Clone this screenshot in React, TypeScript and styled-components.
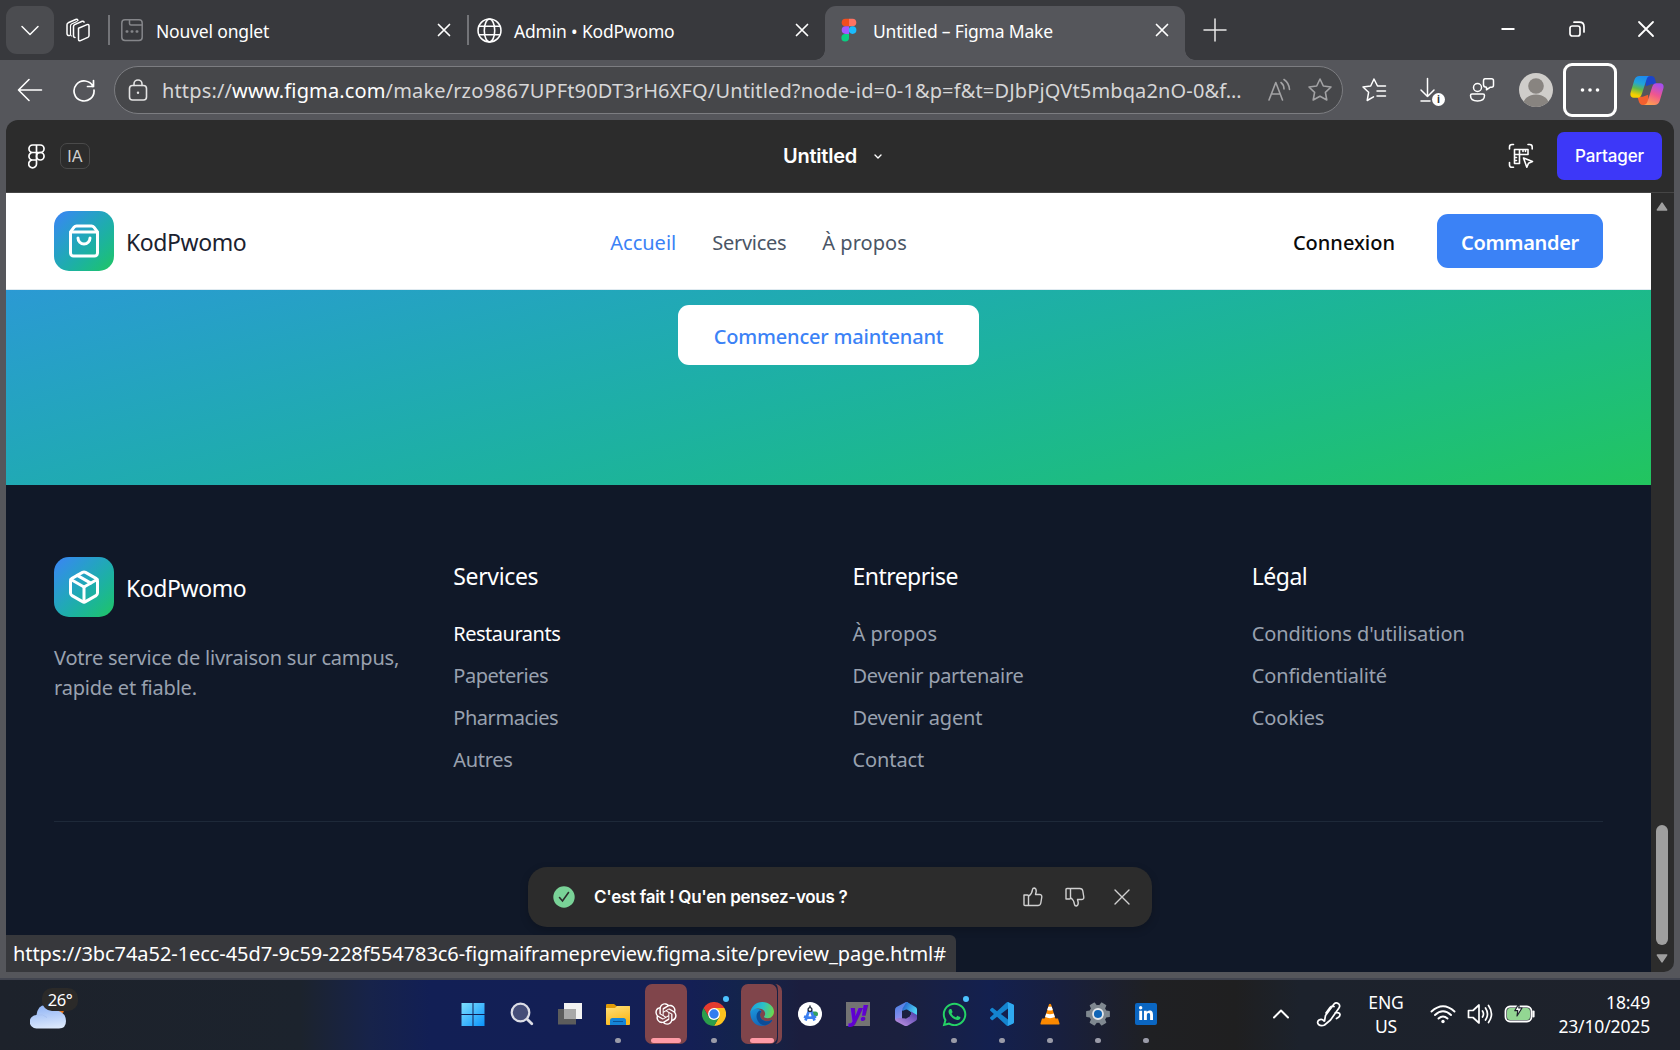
import React from 'react';
import styled, { createGlobalStyle, css } from 'styled-components';
import { ShoppingBag, Package } from 'lucide-react';
import { RiOpenaiFill } from 'react-icons/ri';
import { FaWhatsapp, FaLinkedinIn } from 'react-icons/fa';

const GlobalStyle = createGlobalStyle`
  * { box-sizing: border-box; }
  body { margin: 0; background: #55565b; overflow: hidden; }
`;

const segoe = css`font-family: 'Noto Sans', 'Open Sans', sans-serif;`;
const inter = css`font-family: Inter, sans-serif;`;
const brandGradient = 'linear-gradient(to bottom right in oklab, #3b82f6, #22c55e)';

const Desktop = styled.div`
  width: 1680px;
  height: 1050px;
  display: flex;
  flex-direction: column;
  background: #55565b;
  ${segoe}
`;

/* ---------- shared ---------- */

const Text = styled.span<{ $ls?: number }>`
  white-space: nowrap;
  letter-spacing: ${(p) => p.$ls ?? 0}px;
`;

const Icon = styled.svg<{ $stroke?: string; $sw?: number }>`
  display: block;
  flex: none;
  fill: none;
  stroke: ${(p) => p.$stroke ?? '#fff'};
  stroke-width: ${(p) => p.$sw ?? 1.5};
  stroke-linecap: round;
  stroke-linejoin: round;
`;

const Glyph = styled.svg`
  display: block;
  flex: none;
`;

const Slot = styled.div<{ $w: number }>`
  flex: none;
  width: ${(p) => p.$w}px;
  height: 100%;
  display: flex;
  align-items: center;
  justify-content: center;
`;

/* ---------- tab strip ---------- */

const TabStrip = styled.div`
  flex: none;
  height: 60px;
  display: flex;
  background: #38393d;
`;

const TabMenu = styled.div`
  flex: none;
  width: 48px;
  height: 48px;
  margin: 6px 0 0 6px;
  border-radius: 11px;
  background: #4b4c50;
  display: flex;
  align-items: center;
  justify-content: center;
`;

const TabDivider = styled.div<{ $gap?: number }>`
  flex: none;
  width: 2px;
  height: 30px;
  margin: 15px 0 0 ${(p) => p.$gap ?? 0}px;
  background: #737478;
`;

const Tab = styled.div<{ $w: number; $active?: boolean; $left: number }>`
  position: relative;
  flex: none;
  width: ${(p) => p.$w}px;
  height: 54px;
  margin-top: 6px;
  padding: 0 11px 6px ${(p) => p.$left}px;
  display: flex;
  align-items: center;
  gap: 12px;
  border-radius: 11px 11px 0 0;
  background: ${(p) => (p.$active ? '#55565b' : 'transparent')};
  color: #fff;
  font-size: 17.5px;
  ${(p) =>
    p.$active &&
    css`
      &::before, &::after {
        content: '';
        position: absolute;
        bottom: 0;
        width: 10px;
        height: 10px;
      }
      &::before { left: -10px; background: radial-gradient(circle at 0 0, transparent 9.5px, #55565b 10px); }
      &::after { right: -10px; background: radial-gradient(circle at 100% 0, transparent 9.5px, #55565b 10px); }
    `}
`;

const TabTitle = styled(Text)`
  flex: 1;
  padding-top: 1px;
`;

const WindowControls = styled.div`
  margin-left: auto;
  display: flex;
  height: 58px;
`;

/* ---------- address bar ---------- */

const Toolbar = styled.div`
  flex: none;
  height: 60px;
  padding-left: 3px;
  display: flex;
  align-items: center;
`;

const AddressBar = styled.div`
  flex: none;
  width: 1229px;
  height: 48px;
  margin: 0 4px 0 3px;
  padding-left: 11px;
  display: flex;
  align-items: center;
  border: 1px solid #7c7d81;
  border-radius: 24px;
  background: #46474a;
`;

const Url = styled(Text)`
  width: 1108px;
  padding: 1px 0 0 12px;
  font-size: 20px;
  color: #d6d6d7;
  b { font-weight: 400; color: #fff; }
`;

const DownloadSlot = styled(Slot)`
  position: relative;
`;

const DownloadBadge = styled.span`
  position: absolute;
  left: 31px;
  top: 33px;
  width: 13px;
  height: 13px;
  border-radius: 50%;
  background: #fff;
  color: #333;
  font-weight: 700;
  font-size: 10px;
  line-height: 13px;
  text-align: center;
`;

const MoreButton = styled.div`
  flex: none;
  width: 54px;
  height: 54px;
  border: 3px solid #fff;
  border-radius: 9px;
  display: flex;
  align-items: center;
  justify-content: center;
`;

/* ---------- page ---------- */

const PageFrame = styled.div`
  position: relative;
  flex: none;
  height: 852px;
  margin: 0 6px;
  display: flex;
  flex-direction: column;
  border-radius: 12px 12px 10px 0;
  overflow: hidden;
  background: #2c2c2c;
`;

const FigmaBar = styled.header`
  flex: none;
  height: 73px;
  border-bottom: 1px solid #454545;
  padding: 0 12px 0 22px;
  display: flex;
  align-items: center;
  color: #fff;
  ${inter}
`;

const FileGroup = styled.div`
  width: 755px;
  display: flex;
  align-items: center;
  gap: 15px;
`;

const AiBadge = styled.div`
  width: 30px;
  height: 26px;
  border: 1px solid #4a4a4a;
  border-radius: 7px;
  display: flex;
  align-items: center;
  justify-content: center;
  font-size: 16.5px;
  color: #cfcfcf;
`;

const FileTitle = styled(Text)`
  margin-right: 14px;
  font-size: 20px;
  font-weight: 600;
`;

const BarActions = styled.div`
  margin-left: auto;
  display: flex;
  align-items: center;
  gap: 23px;
`;

const ShareButton = styled.button`
  width: 105px;
  height: 48px;
  padding: 0;
  border: 0;
  border-radius: 7px;
  background: #3d38f8;
  color: #fff;
  font-size: 17px;
  font-weight: 500;
  letter-spacing: -0.12px;
  ${inter}
`;

const Viewport = styled.div`
  flex: 1;
  min-height: 0;
  display: flex;
`;

const Site = styled.div`
  width: 1645px;
  display: flex;
  flex-direction: column;
`;

const SiteHeader = styled.header`
  flex: none;
  height: 97px;
  padding: 0 48px;
  display: flex;
  align-items: center;
  background: #fff;
  border-bottom: 1px solid #dfeaf0;
`;

const Brand = styled.div`
  display: flex;
  align-items: center;
  gap: 12px;
`;

const BrandMark = styled.div`
  flex: none;
  width: 60px;
  height: 60px;
  border-radius: 15px;
  display: flex;
  align-items: center;
  justify-content: center;
  background: ${brandGradient};
  color: #fff;
`;

const BrandName = styled(Text)<{ $dark?: boolean }>`
  padding-top: 1px;
  font-size: 23px;
  line-height: 36px;
  color: ${(p) => (p.$dark ? '#1b2230' : '#fff')};
`;

const Nav = styled.nav`
  margin-left: 364px;
  display: flex;
  gap: 36px;
  padding-top: 3px;
`;

const NavLink = styled(Text)<{ $active?: boolean }>`
  font-size: 20px;
  color: ${(p) => (p.$active ? '#3b82f6' : '#4a5565')};
`;

const Account = styled.div`
  margin-left: auto;
  display: flex;
  align-items: center;
  gap: 42px;
`;

const SignIn = styled(Text)`
  padding-top: 3px;
  font-size: 20px;
  font-weight: 500;
  color: #0a0a0a;
`;

const OrderButton = styled.button`
  width: 166px;
  height: 54px;
  padding: 2px 0 0;
  border: 0;
  border-radius: 11px;
  background: #3b82f6;
  color: #fff;
  font-size: 20px;
  font-weight: 600;
  letter-spacing: -0.32px;
  ${segoe}
`;

const CallToAction = styled.section`
  flex: none;
  height: 195px;
  padding-top: 15px;
  display: flex;
  justify-content: center;
  background: ${brandGradient} bottom / 100% 432px no-repeat;
`;

const StartButton = styled.button`
  width: 301px;
  height: 60px;
  padding: 2px 0 0;
  border: 0;
  border-radius: 11px;
  background: #fff;
  color: #3b82f6;
  font-size: 20px;
  font-weight: 500;
  letter-spacing: -0.2px;
  ${segoe}
`;

const Footer = styled.footer`
  flex: 1;
  padding: 72px 48px 0;
  background: #101828;
`;

const FooterGrid = styled.div`
  display: grid;
  grid-template-columns: repeat(4, 1fr);
  column-gap: 48px;
  padding-bottom: 48px;
  border-bottom: 1px solid #1e2939;
`;

const Tagline = styled.p`
  margin: 26px 0 0;
  font-size: 20px;
  line-height: 30px;
  letter-spacing: -0.21px;
  white-space: nowrap;
  color: #99a1af;
`;

const ColumnTitle = styled.h3`
  margin: 1px 0 23px;
  font-size: 23px;
  font-weight: 400;
  line-height: 36px;
  color: #fff;
`;

const LinkList = styled.ul`
  margin: 0;
  padding: 2px 0 0;
  height: 156px;
  list-style: none;
  display: flex;
  flex-direction: column;
  gap: 12px;
`;

const FooterLink = styled.li<{ $hover?: boolean }>`
  flex: none;
  height: 30px;
  font-size: 20px;
  line-height: 30px;
  color: ${(p) => (p.$hover ? '#fff' : '#99a1af')};
`;

const Scrollbar = styled.div`
  width: 23px;
  display: flex;
  flex-direction: column;
  align-items: center;
  padding: 9px 1px 9px 0;
`;

const Thumb = styled.div`
  width: 12px;
  height: 120px;
  margin: auto 0 8px;
  border-radius: 6px;
  background: #9f9f9f;
`;

const Toast = styled.div`
  position: absolute;
  left: 522px;
  top: 747px;
  width: 624px;
  height: 60px;
  padding: 0 19px 0 25px;
  display: flex;
  align-items: center;
  border-radius: 19px;
  background: #2c2c2c;
  box-shadow: 0 3px 8px rgba(0, 0, 0, 0.2);
  color: #fff;
  ${inter}
`;

const ToastText = styled(Text)`
  flex: 1;
  margin-left: 19px;
  font-size: 17px;
  font-weight: 600;
`;

const ToastActions = styled.div`
  display: flex;
  align-items: center;
  gap: 20px;
`;

const DismissIcon = styled(Icon)`
  margin-left: 5px;
`;

const LinkStatus = styled.div`
  position: absolute;
  left: 0;
  bottom: 0;
  width: 950px;
  height: 37px;
  padding: 1px 0 0 7px;
  border-radius: 0 6px 0 0;
  background: #37383c;
  color: #fff;
  font-size: 20px;
  line-height: 36px;
`;

/* ---------- taskbar ---------- */

const Taskbar = styled.footer`
  flex: none;
  height: 72px;
  margin-top: 6px;
  padding-bottom: 2px;
  display: flex;
  align-items: center;
  border-top: 2px solid #41444f;
  color: #fff;
  font-size: 17.5px;
  background: linear-gradient(90deg, #1d222b 0, #1c232d 300px, #17234a 370px, #121f55 430px, #141f55 690px, #13244b 745px, #1b1e3e 800px,
    #1b203e 900px, #13204f 990px, #181f3e 1060px, #1f2023 1150px, #1f1f20 1235px, #1c222c 1300px, #1e222b 1680px);
`;

const Weather = styled.div`
  position: relative;
  flex: none;
  width: 450px;
  height: 70px;
  padding: 25px 0 0 30px;
`;

const Temperature = styled.span`
  position: absolute;
  left: 42px;
  top: 9px;
  width: 36px;
  height: 23px;
  border-radius: 10px;
  background: #2b2a29;
  font-size: 16.5px;
  line-height: 23px;
  text-align: center;
  letter-spacing: -0.4px;
`;

const AppSlot = styled.div`
  position: relative;
  flex: none;
  width: 48px;
  height: 60px;
  display: flex;
  align-items: center;
  justify-content: center;
  &:nth-of-type(2) { padding-right: 2px; }
`;

const ActiveTile = styled.div<{ $stacked?: boolean }>`
  width: ${(p) => (p.$stacked ? 36 : 42)}px;
  margin-right: ${(p) => (p.$stacked ? 6 : 0)}px;
  height: 60px;
  padding-left: ${(p) => (p.$stacked ? 6 : 0)}px;
  border-radius: 7px;
  background: #80454b;
  display: flex;
  align-items: center;
  justify-content: center;
`;

const StackEdge = styled.div`
  position: absolute;
  left: 34px;
  top: 0;
  width: 10px;
  height: 60px;
  border-right: 4px solid #80454b;
  border-radius: 0 7px 7px 0;
`;

const Running = styled.div<{ $w?: number }>`
  position: absolute;
  bottom: 1px;
  left: 50%;
  width: ${(p) => p.$w ?? 6}px;
  height: 5px;
  transform: translateX(-50%);
  border-radius: 3px;
  background: ${(p) => (p.$w ? '#ff9ba6' : '#9a9ba8')};
`;

const Unread = styled.div`
  position: absolute;
  left: 33px;
  top: 12px;
  width: 6px;
  height: 6px;
  border-radius: 50%;
  background: #4cc2ff;
`;

const YahooTile = styled.div`
  width: 24px;
  height: 24px;
  background: #737373;
  color: #5f01d1;
  font: italic 900 22px/20px 'Open Sans', sans-serif;
  letter-spacing: -1px;
  text-align: center;
`;

const LinkedInTile = styled.div`
  width: 22px;
  height: 22px;
  border-radius: 2px;
  background: #0a66c2;
  display: flex;
  align-items: center;
  justify-content: center;
`;

const Tray = styled.div`
  height: 68px;
  margin-left: auto;
  padding-right: 30px;
  display: flex;
  align-items: center;
`;

const Stacked = styled.div<{ $w: number; $align: 'center' | 'right' }>`
  width: ${(p) => p.$w}px;
  text-align: ${(p) => p.$align};
  line-height: 24px;
  letter-spacing: -0.15px;
`;

/* ---------- drawings ---------- */

const CloseIcon = () => (
  <Icon width={24} height={24} viewBox="0 0 24 24" $sw={1.7}>
    <path d="M6.500 6.500l11 11M17.500 6.500L6.500 17.500" />
  </Icon>
);

const FigmaColor = () => (
  <Glyph width={24} height={24} viewBox="0 0 24 24">
    <path d="M12 .7H8.500a3.800 3.800 0 0 0 0 7.600H12z" fill="#f24e1e" />
    <path d="M12 .7h3.500a3.800 3.800 0 0 1 0 7.600H12z" fill="#ff7262" />
    <path d="M12 8.300H8.500a3.800 3.800 0 0 0 0 7.600H12z" fill="#a259ff" />
    <circle cx="15.600" cy="12.100" r="3.800" fill="#1abcfe" />
    <path d="M12 15.900H8.500a3.800 3.800 0 1 0 3.500 3.800z" fill="#0acf83" />
  </Glyph>
);

const CopilotLogo = () => (
  <Glyph width={34} height={31} viewBox="0 0 32 30" preserveAspectRatio="none">
    <defs>
      <linearGradient id="cpL" x1="0.6" y1="0" x2="0.35" y2="1">
        <stop offset="0" stopColor="#1c8af0" />
        <stop offset="0.35" stopColor="#22a5d8" />
        <stop offset="0.6" stopColor="#5fb94e" />
        <stop offset="0.9" stopColor="#f5d000" />
      </linearGradient>
      <linearGradient id="cpR" x1="0.7" y1="0" x2="0.3" y2="1">
        <stop offset="0" stopColor="#a44df0" />
        <stop offset="0.5" stopColor="#f0568e" />
        <stop offset="1" stopColor="#ffa14f" />
      </linearGradient>
    </defs>
    <path d="M14 1h6c2 0 3 1 3.600 3l1.400 5h-5l-5 2z" fill="#1c45c9" />
    <path d="M18 29h-6c-2 0-3-1-3.600-3L7 21h5l5-2z" fill="#f3602f" />
    <path d="M9 1h10c-2 0-3 1.500-3.700 4l-4 13c-1 3-2 4-4 4H3.500C1 22-.2 20 .6 17L4 5C5 2 6.500 1 9 1z" fill="url(#cpL)" />
    <path d="M23 29H13c2 0 3-1.500 3.700-4l4-13c1-3 2-4 4-4h3.800c2.500 0 3.700 2 2.900 5L28 25c-1 3-2.500 4-5 4z" fill="url(#cpR)" />
  </Glyph>
);

const WindowsLogo = () => (
  <Glyph width={24} height={24} viewBox="0 0 24 24">
    <defs>
      <linearGradient id="win" x1="0" y1="0" x2="1" y2="1">
        <stop offset="0" stopColor="#7fe0ff" />
        <stop offset="1" stopColor="#0a93fb" />
      </linearGradient>
    </defs>
    <path d="M.5 1h11v11h-11zM12.500 1h11v11h-11zM.5 13h11v11h-11zM12.500 13h11v11h-11z" fill="url(#win)" />
  </Glyph>
);

const SearchLogo = () => (
  <Icon width={24} height={24} viewBox="0 0 24 24" $stroke="#dcdde6" $sw={2.2}>
    <path d="M17.500 17.500l4.300 4.300" strokeWidth="2.800" />
    <circle cx="10.500" cy="10.500" r="8.800" fill="#454d78" />
  </Icon>
);

const TaskViewLogo = () => (
  <Glyph width={24} height={24} viewBox="0 0 24 24">
    <path d="M0 7h18v15.500H0z" fill="#5c5c5c" />
    <path d="M6 1h18v16H6z" fill="#f2f2f2" />
    <path d="M6 7h12v10H6z" fill="#a8a8a8" />
  </Glyph>
);

const ExplorerLogo = () => (
  <Glyph width={24} height={24} viewBox="0 0 24 24">
    <defs>
      <linearGradient id="fold" x1="0" y1="0" x2="0.4" y2="1">
        <stop offset="0" stopColor="#ffe07a" />
        <stop offset="1" stopColor="#fbb91c" />
      </linearGradient>
    </defs>
    <path d="M0 3.200Q0 2 1.200 2H8l2.500 2H24v5H0z" fill="#e19b07" />
    <path d="M0 6h9l2-2h12q1 0 1 1v17q0 1-1 1H1q-1 0-1-1z" fill="url(#fold)" />
    <path d="M4 23v-4.500Q4 16 6.500 16h11q2.500 0 2.500 2.500V23z" fill="#1585d8" />
    <path d="M7 19.500h10" stroke="#0b5497" />
  </Glyph>
);

const ChromeLogo = () => (
  <Glyph width={24} height={24} viewBox="0 0 24 24">
    <path d="M1.600 6A12 12 0 0 1 22.400 6H12v6l-5.200 3z" fill="#e33b2e" />
    <path d="M22.400 6A12 12 0 0 1 12 24l5.200-9L12 12V6z" fill="#fcc31e" />
    <path d="M12 24A12 12 0 0 1 1.600 6l5.200 9L12 12l5.200 3z" fill="#2b9e4b" />
    <circle cx="12" cy="12" r="5.900" fill="#fff" />
    <circle cx="12" cy="12" r="4.700" fill="#2f7df0" />
  </Glyph>
);

const EdgeLogo = () => (
  <Glyph width={24} height={24} viewBox="0 0 24 24">
    <defs>
      <linearGradient id="edT" x1="0" y1="0.300" x2="1" y2="0.500">
        <stop offset="0" stopColor="#1a9fe0" />
        <stop offset="0.500" stopColor="#2bc0c8" />
        <stop offset="1" stopColor="#6ad84e" />
      </linearGradient>
      <linearGradient id="edB" x1="0" y1="0" x2="0.600" y2="1">
        <stop offset="0" stopColor="#1b96dc" />
        <stop offset="1" stopColor="#1362b4" />
      </linearGradient>
    </defs>
    <path d="M.3 10C0 18 5 24 12 24c4.500 0 8-2 10-5.200.3-.6-.1-.9-.6-.6-5 2.600-11.400.3-11.400-5.200 0-1.500.6-2.600 1.500-3.500C10 6 2 5 .3 10z" fill="url(#edB)" />
    <path d="M9.500 8.500C6.500 10.500 6 14 7 17c1.200 3.800 5 6.600 8.500 6.200 2.800-.7 5-2.300 6.500-4.400.3-.6-.1-.9-.6-.6-5 2.600-11.400.3-11.400-5.200 0-1.500.6-2.600 1.500-3.500z" fill="#0c4c97" />
    <path d="M.2 11C1 4.500 6 0 12.200 0 19 0 24 4.700 24 9.800c0 4-3 6.400-6.300 6.400-3 0-4.200-1.100-3.500-2 .8-1 1.100-1.700.9-3C14.700 8.500 12 6.600 8.500 6.600 4.500 6.600 1.200 8.400.2 11z" fill="url(#edT)" />
  </Glyph>
);

const StudioLogo = () => (
  <Glyph width={24} height={24} viewBox="0 0 24 24">
    <circle cx="12" cy="12" r="12" fill="#fff" />
    <path d="M14 9.500h3.500a2 2 0 0 1 0 5H14z" fill="#34a160" />
    <path d="M11.200 8L7.500 18.500M12.800 8l3.700 10.500M6 14.500q6 2.500 12 0" stroke="#3b7ff0" strokeWidth="2.700" fill="none" />
    <circle cx="12" cy="7.500" r="1.900" fill="#fff" stroke="#222c3c" strokeWidth="1.300" />
    <path d="M12 3.500v2" stroke="#222c3c" strokeWidth="1.500" />
  </Glyph>
);

const M365Logo = () => (
  <Glyph width={24} height={24} viewBox="0 0 24 24">
    <defs>
      <linearGradient id="mA" x1="0" y1="0" x2="0.300" y2="1">
        <stop offset="0" stopColor="#3f7fe0" />
        <stop offset="1" stopColor="#9c8ff0" />
      </linearGradient>
      <linearGradient id="mB" x1="0" y1="0" x2="1" y2="0.500">
        <stop offset="0" stopColor="#1f55c8" />
        <stop offset="1" stopColor="#4fd2f5" />
      </linearGradient>
      <linearGradient id="mC" x1="0" y1="1" x2="1" y2="0">
        <stop offset="0" stopColor="#c79be8" />
        <stop offset="1" stopColor="#4b3aa8" />
      </linearGradient>
    </defs>
    <path d="M12 0L2.500 5Q1 6 1 8v9l7 3V9l6-9z" fill="url(#mA)" />
    <path d="M12.500 0L8.500 6.500V9L13 7.500l10 6.500V7.500q0-1.600-1.500-2.500L14 .5q-.8-.5-1.500-.5z" fill="url(#mB)" />
    <path d="M1 17l4-1 7 .5 5-4V9.500l6 3.500v3.500q0 1.500-1.500 2.500L14 23.500q-2 1-4 0L2.500 19.500Q1 18.500 1 17z" fill="url(#mC)" />
    <path d="M12 7.600l4 2.200v4.400l-4 2.300-4-2.300V9.800z" fill="#1a1f40" />
  </Glyph>
);

const VsCodeLogo = () => (
  <Glyph width={24} height={24} viewBox="0 0 24 24">
    <path fill="#1484cf" d="M23.15 2.587L18.21.21a1.494 1.494 0 0 0-1.705.29l-9.46 8.630-4.120-3.128a.999.999 0 0 0-1.276.057L.327 7.261A1 1 0 0 0 .326 8.740L3.899 12 .326 15.260a1 1 0 0 0 .001 1.479L1.650 17.940a.999.999 0 0 0 1.276.057l4.120-3.128 9.460 8.630a1.492 1.492 0 0 0 1.704.290l4.942-2.377A1.500 1.500 0 0 0 24 20.060V3.939a1.500 1.500 0 0 0-.850-1.352zm-5.146 14.861L10.826 12l7.178-5.448v10.896z" />
    <path fill="#2fa9f0" d="M23.15 2.587L18.210.210q-.2-.1-.4-.1l.2 6.400v10.900l-.2 6.500q.2 0 .4-.1l4.940-2.380A1.500 1.500 0 0 0 24 20.060V3.940a1.500 1.500 0 0 0-.85-1.350z" />
  </Glyph>
);

const VlcLogo = () => (
  <Glyph width={24} height={24} viewBox="0 0 24 24">
    <path d="M4 16.500h16l1.500 5q.3 1-.7 1H3.200q-1 0-.7-1z" fill="#fb8800" />
    <path d="M11 2.200q1-1 2 0L17.500 17q-5.500 3-11 0z" fill="#ff8c00" />
    <path d="M10.200 4.800h3.600l1 3.200q-2.800 1.200-5.600 0zM8.200 11.500q3.800 1.600 7.600 0l1.100 3.600q-4.900 2.200-9.800 0z" fill="#fff" />
  </Glyph>
);

const SettingsLogo = () => (
  <Glyph width={26} height={26} viewBox="1.500 1.500 21 21">
    <path
      transform="rotate(30 12 12)"
      fill="#7f8890"
      d="M19.140 12.940c.040-.3.060-.610.060-.940 0-.320-.020-.640-.070-.940l2.030-1.580a.490.490 0 0 0 .120-.610l-1.920-3.320a.488.488 0 0 0-.590-.220l-2.390.960c-.5-.380-1.030-.7-1.620-.940l-.360-2.540a.484.484 0 0 0-.480-.410h-3.840c-.240 0-.430.170-.470.410l-.360 2.540c-.590.240-1.130.570-1.620.940l-2.390-.960c-.220-.080-.470 0-.590.220L2.740 8.870c-.120.210-.080.470.120.610l2.030 1.580c-.050.3-.090.630-.090.940s.020.640.070.940l-2.030 1.580a.490.490 0 0 0-.120.610l1.920 3.320c.120.220.370.290.590.220l2.390-.960c.5.380 1.030.7 1.620.940l.360 2.540c.050.240.240.410.480.410h3.840c.240 0 .440-.170.470-.410l.360-2.540c.590-.240 1.130-.560 1.620-.940l2.390.960c.220.080.470 0 .590-.220l1.920-3.320c.120-.220.070-.470-.120-.610z"
    />
    <circle cx="12" cy="12" r="4" fill="#0f64b5" stroke="#e4e7ea" strokeWidth="1.500" />
  </Glyph>
);

type App = { icon: React.ReactNode; running?: boolean; unread?: boolean; tile?: 'single' | 'stack' };

const apps: App[] = [
  { icon: <WindowsLogo /> },
  { icon: <SearchLogo /> },
  { icon: <TaskViewLogo /> },
  { icon: <ExplorerLogo />, running: true },
  { icon: <RiOpenaiFill size={26} color="#fff" />, tile: 'single' },
  { icon: <ChromeLogo />, running: true, unread: true },
  { icon: <EdgeLogo />, tile: 'stack' },
  { icon: <StudioLogo /> },
  { icon: <YahooTile>y!</YahooTile> },
  { icon: <M365Logo /> },
  { icon: <FaWhatsapp size={27} color="#25d366" />, running: true, unread: true },
  { icon: <VsCodeLogo />, running: true },
  { icon: <VlcLogo />, running: true },
  { icon: <SettingsLogo />, running: true },
  { icon: <LinkedInTile><FaLinkedinIn size={16} color="#fff" /></LinkedInTile>, running: true },
];

const columns = [
  { title: 'Services', ls: -0.34, links: [['Restaurants', -0.48], ['Papeteries', -0.47], ['Pharmacies', -0.45], ['Autres', -0.3]] },
  { title: 'Entreprise', ls: -0.55, links: [['À propos', 0.05], ['Devenir partenaire', -0.28], ['Devenir agent', -0.2], ['Contact', -0.1]] },
  { title: 'Légal', ls: -0.5, links: [["Conditions d'utilisation", -0.09], ['Confidentialité', -0.15], ['Cookies', -0.15]] },
] as { title: string; ls: number; links: [string, number][] }[];

export default function App() {
  return (
    <Desktop>
      <GlobalStyle />
      <TabStrip>
        <TabMenu>
          <Icon width={24} height={24} viewBox="0 0 24 24"><path d="M4 8.500l8 8 8-8" /></Icon>
        </TabMenu>
        <Slot $w={48}>
          <Icon width={28} height={28} viewBox="0 0 28 28">
            <path d="M14.500 12.200l8.500-3.600q2-.6 2 1.400v9.500q0 1.300-1.200 1.900l-7.300 3.200q-2 .7-2-1.300z" />
            <path d="M11 21.500q-1.500 0-1.500-2V10.500q0-1.300 1.200-1.900l7.500-3.300q1.300-.5 1.900.8M5.500 19.500Q3 19.700 3 17.500V8.700q0-1.300 1.200-1.900l7.500-3.300q1.500-.6 2.200.8" />
            <path d="M13 5.500l-5 2.300Q6.500 8.500 6.500 10v8.500q0 1.500 1.200 1.500" strokeWidth="1.200" />
          </Icon>
        </Slot>
        <TabDivider $gap={6} />
        <Tab $w={357} $left={10}>
          <Icon width={24} height={24} viewBox="0 0 24 24" $stroke="#85868a">
            <rect x="1.800" y="1.800" width="20.400" height="20.600" rx="3.200" />
            <path d="M9.500 2v3.500q0 1.500 1.500 1.500h11" />
            <path d="M6.700 13.500h.6M11.700 13.500h.6M16.700 13.500h.6" strokeWidth="2.400" />
          </Icon>
          <TabTitle $ls={-0.18}>Nouvel onglet</TabTitle>
          <CloseIcon />
        </Tab>
        <TabDivider />
        <Tab $w={356} $left={8}>
          <Icon width={25} height={25} viewBox="0 0 24 24">
            <circle cx="12" cy="12" r="11" />
            <ellipse cx="12" cy="12" rx="5" ry="11" />
            <path d="M2 8h20M2 16h20" />
          </Icon>
          <TabTitle $ls={-0.18}>Admin • KodPwomo</TabTitle>
          <CloseIcon />
        </Tab>
        <Tab $w={360} $left={12} $active>
          <FigmaColor />
          <TabTitle $ls={-0.18}>Untitled – Figma Make</TabTitle>
          <CloseIcon />
        </Tab>
        <Slot $w={59}>
          <Icon width={26} height={26} viewBox="0 0 26 26" $stroke="#e8e8e8"><path d="M13 2v22M2 13h22" /></Icon>
        </Slot>
        <WindowControls>
          <Slot $w={69}><Icon width={18} height={18} viewBox="0 0 18 18" $sw={2}><path d="M2.500 9h13" strokeLinecap="butt" /></Icon></Slot>
          <Slot $w={69}>
            <Icon width={18} height={18} viewBox="0 0 18 18" $sw={1.7}>
              <rect x="2" y="6" width="10" height="10" rx="2.300" />
              <path d="M6 2.200h5.500q4.500 0 4.500 4.500V12" />
            </Icon>
          </Slot>
          <Slot $w={69}><Icon width={18} height={18} viewBox="0 0 18 18" $sw={1.8}><path d="M2 2l14 14M16 2L2 16" /></Icon></Slot>
        </WindowControls>
      </TabStrip>

      <Toolbar>
        <Slot $w={54}>
          <Icon width={26} height={26} viewBox="0 0 26 26" $sw={1.6}><path d="M24.500 13H2M12 2.500L1.500 13 12 23.500" /></Icon>
        </Slot>
        <Slot $w={54}>
          <Icon width={24} height={24} viewBox="0 0 24 24" $sw={1.7}><path d="M21 8.500A10 10 0 1 0 22 12M21.500 2.500v6h-6" /></Icon>
        </Slot>
        <AddressBar>
          <Icon width={24} height={24} viewBox="0 0 24 24" $stroke="#e3e3e3" $sw={1.6}>
            <rect x="3.500" y="7.500" width="17" height="14.500" rx="3" />
            <path d="M8 7.500V6a4 4 0 0 1 8 0v1.500" />
            <circle cx="12" cy="14.800" r="1.200" fill="#e3e3e3" stroke="none" />
          </Icon>
          <Url $ls={0.14}>
            https://<b>www.figma.com</b>/make/rzo9867UPFt90DT3rH6XFQ/Untitled?node-id=0-1&amp;p=f&amp;t=DJbPjQVt5mbqa2nO-0&amp;f…
          </Url>
          <Slot $w={42}>
            <Icon width={26} height={26} viewBox="0 0 26 26" $stroke="#a2a2a4" $sw={1.6}>
              <path d="M3 23L9.800 5.500 16.500 23M5.500 17h8.500M15 5.500q3 2.300 3 6.500M18 2.500q5 3.300 5.500 10" />
            </Icon>
          </Slot>
          <Slot $w={40}>
            <Icon width={26} height={26} viewBox="0 0 26 26" $stroke="#a2a2a4" $sw={1.6}>
              <path d="M13 2l3.300 7 7.700 1-5.600 5.300 1.400 7.700L13 19.300 6.200 23l1.400-7.700L2 10l7.700-1z" />
            </Icon>
          </Slot>
        </AddressBar>
        <Slot $w={54}>
          <Icon width={26} height={26} viewBox="0 0 26 26">
            <path d="M16.500 9L13 2 9.700 9 2 10l5.600 5.300L6.200 23.500l6.300-3.700M17 9h7.500M16 14h8.500M16 19h8.500" />
          </Icon>
        </Slot>
        <DownloadSlot $w={54}>
          <Icon width={26} height={26} viewBox="0 0 26 26"><path d="M12.500 1.500v18M6 13l6.500 6.500L19 13M6 24h9" /></Icon>
          <DownloadBadge>i</DownloadBadge>
        </DownloadSlot>
        <Slot $w={54}>
          <Icon width={26} height={26} viewBox="0 0 26 26">
            <circle cx="8.500" cy="10.500" r="4" />
            <path d="M3 17h11q1.500 0 1.500 1.500 0 5.500-7 5.500t-7-5.500Q1.500 17 3 17zM16 1.700h6.500q2 0 2 2v4.600q0 2-2 2H21l-3.500 2.500v-2.500q-3 0-3-2.500V4q0-2.300 1.500-2.300z" />
          </Icon>
        </Slot>
        <Slot $w={54}>
          <Glyph width={34} height={34} viewBox="0 0 34 34">
            <clipPath id="avatar"><circle cx="17" cy="17" r="17" /></clipPath>
            <g clipPath="url(#avatar)">
              <path d="M0 0h34v34H0z" fill="#cfcdca" />
              <circle cx="17" cy="13" r="7.800" fill="#888480" />
              <ellipse cx="17" cy="32" rx="13" ry="10.500" fill="#888480" />
            </g>
          </Glyph>
        </Slot>
        <MoreButton>
          <Glyph width={20} height={6} viewBox="0 0 20 6" fill="#fff"><circle cx="2.500" cy="3" r="1.800" /><circle cx="10" cy="3" r="1.800" /><circle cx="17.500" cy="3" r="1.800" /></Glyph>
        </MoreButton>
        <Slot $w={60}><CopilotLogo /></Slot>
      </Toolbar>

      <PageFrame>
        <FigmaBar>
          <FileGroup>
            <Icon width={17} height={25} viewBox="0 0 17 25" $sw={1.7}>
              <path d="M8.500 1H4.700a3.700 3.700 0 0 0 0 7.500h3.800zM8.500 1h3.800a3.700 3.700 0 0 1 0 7.500H8.500zM8.500 8.500H4.700a3.700 3.700 0 0 0 0 7.500h3.800zM8.500 16H4.700a3.900 3.900 0 1 0 3.800 3.900z" />
              <circle cx="12.300" cy="12.250" r="3.750" />
            </Icon>
            <AiBadge><Text $ls={-0.15}>IA</Text></AiBadge>
          </FileGroup>
          <FileTitle $ls={-0.23}>Untitled</FileTitle>
          <Icon width={14} height={14} viewBox="0 0 14 14" $sw={1.4}><path d="M4 6l3 3 3-3" /></Icon>
          <BarActions>
            <Icon width={26} height={26} viewBox="0 0 26 26" $sw={1.6}>
              <path d="M1.500 6V4Q1.500 1.500 4 1.500h1.500M20 1.500h1.700q2.500 0 2.500 2.500v2M1.500 19.500V22q0 2.300 2.500 2.300h1.500" />
              <path d="M6.500 6.500H20v5h-8.500v9h-5zM11.500 6.500v5h-5M15 7v1.500M17.500 7v1.500M7 14.500h1.500M7 17.500h1.500" />
              <path d="M15.500 15l9 3.500-4 1.700-1.700 4z" />
            </Icon>
            <ShareButton>Partager</ShareButton>
          </BarActions>
        </FigmaBar>

        <Viewport>
          <Site>
            <SiteHeader>
              <Brand>
                <BrandMark><ShoppingBag size={36} /></BrandMark>
                <BrandName $dark $ls={-0.42}>KodPwomo</BrandName>
              </Brand>
              <Nav>
                <NavLink $active>Accueil</NavLink>
                <NavLink $ls={-0.28}>Services</NavLink>
                <NavLink $ls={0.05}>À propos</NavLink>
              </Nav>
              <Account>
                <SignIn>Connexion</SignIn>
                <OrderButton>Commander</OrderButton>
              </Account>
            </SiteHeader>
            <CallToAction>
              <StartButton>Commencer maintenant</StartButton>
            </CallToAction>
            <Footer>
              <FooterGrid>
                <div>
                  <Brand>
                    <BrandMark><Package size={36} /></BrandMark>
                    <BrandName $ls={-0.42}>KodPwomo</BrandName>
                  </Brand>
                  <Tagline>Votre service de livraison sur campus,<br />rapide et fiable.</Tagline>
                </div>
                {columns.map((c) => (
                  <div key={c.title}>
                    <ColumnTitle><Text $ls={c.ls}>{c.title}</Text></ColumnTitle>
                    <LinkList>
                      {c.links.map(([label, ls]) => (
                        <FooterLink key={label} $hover={label === 'Restaurants'}><Text $ls={ls}>{label}</Text></FooterLink>
                      ))}
                    </LinkList>
                  </div>
                ))}
              </FooterGrid>
            </Footer>
          </Site>
          <Scrollbar>
            <Glyph width={12} height={10} viewBox="0 0 12 10"><path d="M6 1.200L10.600 8H1.400z" fill="#9f9f9f" stroke="#9f9f9f" strokeWidth="1.600" strokeLinejoin="round" /></Glyph>
            <Thumb />
            <Glyph width={12} height={10} viewBox="0 0 12 10"><path d="M6 8.800L10.600 2H1.400z" fill="#9f9f9f" stroke="#9f9f9f" strokeWidth="1.600" strokeLinejoin="round" /></Glyph>
          </Scrollbar>
        </Viewport>

        <Toast>
          <Glyph width={22} height={22} viewBox="0 0 22 22">
            <circle cx="11" cy="11" r="10.700" fill="#79d297" />
            <path d="M6.500 11.500l3 3.500 6-8.500" fill="none" stroke="#2c2c2c" strokeWidth="1.600" strokeLinecap="round" />
          </Glyph>
          <ToastText $ls={-0.28}>C'est fait ! Qu'en pensez-vous ?</ToastText>
          <ToastActions>
            <Icon width={22} height={22} viewBox="0 0 22 22" $stroke="#d0d0d0" $sw={1.4}>
              <path d="M2 9h3.500q1 0 1 1v8.500q0 1-1 1H3q-1 0-1-1zM6.500 10.500Q10 8 10.500 3.500 10.800 2 12.200 2q2.300.5 2 3.500L13.500 8.500h4q2.500 0 2.300 2.500l-1 6q-.4 2.500-3 2.500H6.500" />
            </Icon>
            <Icon width={22} height={22} viewBox="0 0 22 22" $stroke="#d0d0d0" $sw={1.4}>
              <path d="M2 13h3.500q1 0 1-1V3.500q0-1-1-1H3q-1 0-1 1zM6.500 11.500q3.500 2.500 4 7 .3 1.500 1.700 1.500 2.300-.5 2-3.500l-.7-3h4q2.500 0 2.300-2.500l-1-6Q18.400 2.500 15.800 2.500H6.500" />
            </Icon>
            <DismissIcon width={22} height={22} viewBox="0 0 22 22" $stroke="#d0d0d0" $sw={1.4}>
              <path d="M4 4l14 14M18 4L4 18" />
            </DismissIcon>
          </ToastActions>
        </Toast>
        <LinkStatus>
          <Text $ls={-0.06}>https://3bc74a52-1ecc-45d7-9c59-228f554783c6-figmaiframepreview.figma.site/preview_page.html#</Text>
        </LinkStatus>
      </PageFrame>

      <Taskbar>
        <Weather>
          <Glyph width={36} height={26} viewBox="0 0 36 26">
            <defs>
              <linearGradient id="cloud" x1="0.3" y1="0" x2="0.5" y2="1">
                <stop offset="0" stopColor="#8fb3f5" />
                <stop offset="1" stopColor="#dbe8fc" />
              </linearGradient>
            </defs>
            <circle cx="29" cy="6" r="5" fill="#e8751a" />
            <path d="M6.500 24.500a6.500 6.500 0 0 1 0-13.500Q8 1 15 1q6 0 8 6 4-1.500 8 1 5 3 5 9 0 7.500-7 7.500z" fill="url(#cloud)" />
            <path d="M7 11q6-1.500 10 2.500" stroke="#a9c2f2" fill="none" />
          </Glyph>
          <Temperature>26°</Temperature>
        </Weather>
        {apps.map((a, i) => (
          <AppSlot key={i}>
            {a.tile ? <ActiveTile $stacked={a.tile === 'stack'}>{a.icon}</ActiveTile> : a.icon}
            {a.tile === 'stack' && <StackEdge />}
            {a.tile && <Running $w={a.tile === 'stack' ? 24 : 30} />}
            {a.running && <Running />}
            {a.unread && <Unread />}
          </AppSlot>
        ))}
        <Tray>
          <Slot $w={48}><Icon width={18} height={18} viewBox="0 0 18 18" $sw={2}><path d="M2 12.500L9 5.500l7 7" /></Icon></Slot>
          <Slot $w={48}>
            <Icon width={26} height={26} viewBox="0 0 26 26" $sw={1.7}>
              <path d="M8.500 20l1-5.500L18 3q2-2.200 4.500-.3 2.200 2 .3 4.500L14.500 19l-6 5Q5 25.500 2.500 23.500q-2-2.500.5-4.500 3-1.500 5 1M18 5.500q-2.500-1-4 1L10 12M19 12q4.500-1 5 1.500.3 2-3.500 4" />
            </Icon>
          </Slot>
          <Stacked $w={66} $align="center">ENG<br />US</Stacked>
          <Slot $w={48}>
            <Icon width={26} height={26} viewBox="0 0 26 26" $sw={1.9}>
              <path d="M1.500 10.500q11.500-10.500 23 0M5 14q8-7.500 16 0M8.500 17.500q4.500-4 9 0" />
              <circle cx="13" cy="20.500" r="1.700" fill="#fff" stroke="none" />
            </Icon>
          </Slot>
          <Slot $w={26}>
            <Icon width={26} height={26} viewBox="0 0 26 26" $sw={1.7}>
              <path d="M1.500 9.500H6L12 4v18l-6-5.500H1.500zM15.500 10q2 3 0 6M18.500 7q4 6 0 12M21.500 4.500q6 8.500 0 17" />
            </Icon>
          </Slot>
          <Slot $w={52}>
            <Icon width={31} height={26} viewBox="0 0 31 26" $sw={1.8}>
              <rect x="1.500" y="5.500" width="26" height="15" rx="4.500" />
              <path d="M29.500 10.500v5" strokeWidth="2.200" />
              <path d="M3 10.500Q3 7 6 7h17q3 0 3 3.500v5q0 3.500-3 3.500H6q-3 0-3-3.500z" fill="#93d793" stroke="none" />
              <path d="M15.500 1.500l-4.700 8.200h3L13 15l5-8h-3.200z" fill="#fff" stroke="#1d222b" strokeWidth="1.200" />
            </Icon>
          </Slot>
          <Stacked $w={105} $align="right">18:49<br />23/10/2025</Stacked>
        </Tray>
      </Taskbar>
    </Desktop>
  );
}
